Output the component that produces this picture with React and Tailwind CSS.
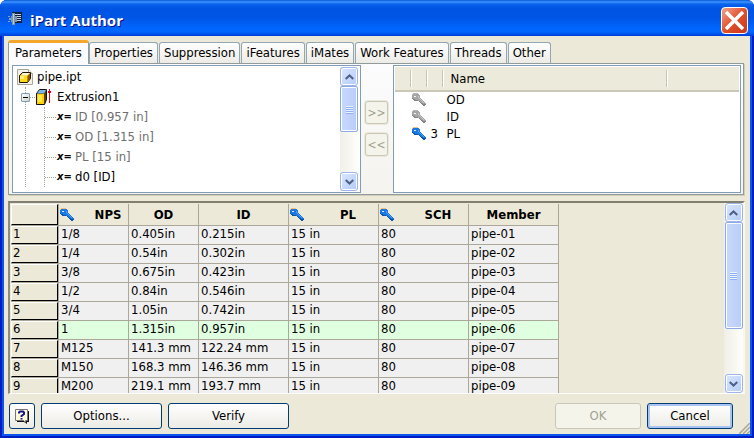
import React, { useState } from 'react';

const TABS = ['Parameters', 'Properties', 'Suppression', 'iFeatures', 'iMates', 'Work Features', 'Threads', 'Other'];

const TREE_PARAMS = [
  { label: 'ID [0.957 in]', used: true },
  { label: 'OD [1.315 in]', used: true },
  { label: 'PL [15 in]', used: true },
  { label: 'd0 [ID]', used: false },
];

const SELECTED = [
  { name: 'OD', order: '' },
  { name: 'ID', order: '' },
  { name: 'PL', order: '3' },
];

const COLUMNS = [
  { name: 'NPS', isKey: true, width: 'w-[70px]' },
  { name: 'OD', isKey: false, width: 'w-[70px]' },
  { name: 'ID', isKey: false, width: 'w-[90px]' },
  { name: 'PL', isKey: true, width: 'w-[90px]' },
  { name: 'SCH', isKey: true, width: 'w-[90px]' },
  { name: 'Member', isKey: false, width: 'w-[90px]' },
];

const ROWS = [
  ['1/8', '0.405in', '0.215in', '15 in', '80', 'pipe-01'],
  ['1/4', '0.54in', '0.302in', '15 in', '80', 'pipe-02'],
  ['3/8', '0.675in', '0.423in', '15 in', '80', 'pipe-03'],
  ['1/2', '0.84in', '0.546in', '15 in', '80', 'pipe-04'],
  ['3/4', '1.05in', '0.742in', '15 in', '80', 'pipe-05'],
  ['1', '1.315in', '0.957in', '15 in', '80', 'pipe-06'],
  ['M125', '141.3 mm', '122.24 mm', '15 in', '80', 'pipe-07'],
  ['M150', '168.3 mm', '146.36 mm', '15 in', '80', 'pipe-08'],
  ['M200', '219.1 mm', '193.7 mm', '15 in', '80', 'pipe-09'],
];

function KeyIcon({ active }) {
  return (
    <svg className="h-[14px] w-[14px] shrink-0" viewBox="0 0 14 14" shapeRendering="crispEdges">
      <path
        d="M1 1h6v1h1v3h1v1h1v1h1v1h1v1h1v1h1v2h-1v1h-2v-1h-1v-1H9v-1H8V9H7V8H2V7H1V6H0V2h1z"
        fill={active ? '#1b78e0' : '#a6a6a6'}
      />
      <path d="M0 5h1v1h2v1h3v1h2v1h1v1h2v1h3v1h-1v1h-2v-1h-1v-1H9v-1H8V9H7V8H2V7H1V6H0z" fill={active ? '#0b55b0' : '#858585'} />
      <path d="M6 3h1v2h1v1h1v1h1v1h1v1h1v1h-1V9h-1V8H9V7H8V6H7V5H6z" fill={active ? '#4ea0f4' : '#c4c4c4'} />
      <path d="M2 3h2v1H2z" fill={active ? '#cfe6ff' : '#f4f4f4'} />
      <path d="M1 0h5v1H1zM0 1h1v1H0z" fill={active ? '#f3bd7c' : '#b4b4b4'} />
    </svg>
  );
}

function AppIcon() {
  return (
    <svg className="h-4 w-4 shrink-0" viewBox="0 0 16 16" shapeRendering="crispEdges">
      <path d="M4 0h10v11H4z" fill="#10243f" />
      <path d="M7 2h6v1H7zM7 4h6v1H7zM7 6h6v1H7zM7 8h6v1H7z" fill="#c6cfda" />
      <path d="M4 1h3v3h2v6H7v3H4v-3H3V4h1z" fill="#7d94ad" />
      <path d="M0 4h2v1H0zM0 9h2v1H0zM1 6h2v2H1z" fill="#7aa6d4" />
      <path d="M5 2h1v10H5z" fill="#b8c9da" />
    </svg>
  );
}

function PartIcon() {
  return (
    <svg className="h-4 w-4 shrink-0" viewBox="0 0 16 16">
      <path d="M.5.500h11l4 4v11H.5z" fill="#f3f1ea" stroke="#a9a79c" />
      <path d="M11.500.500v4h4" fill="#fff" stroke="#a9a79c" />
      <path d="M2.500 6.500l3-3h8v6l-3 4h-8z" fill="#e8b400" stroke="#1c1600" />
      <path d="M3 7h7v6H3z" fill="#ffd91a" />
      <path d="M3 7h4v3H3z" fill="#fff27a" />
      <path d="M6 4h7l-2.500 2.500H4z" fill="#fffbd0" />
      <path d="M10.500 7v6l2.500-3.500V4.500z" fill="#8a5a00" />
    </svg>
  );
}

function ExtrusionIcon() {
  return (
    <svg className="h-4 w-4 shrink-0" viewBox="0 0 16 16">
      <path d="M.5 4.500l3-4h7v10l-2 5h-8z" fill="#5a4300" stroke="#111" />
      <path d="M1 4.500L3.500 1H10L8 4.500z" fill="#7cb4ea" />
      <path d="M1 5h7v10H1z" fill="#ffd000" />
      <path d="M2 6h4v7H2z" fill="#ffe84a" />
      <path d="M13 0h1v14h-1zM12 2h3v2h-3z" fill="#e00010" shapeRendering="crispEdges" />
    </svg>
  );
}

function HelpIcon() {
  return (
    <svg className="h-4 w-4" viewBox="0 0 16 16">
      <path d="M3 3h12v11h-2v2l-3-2H3z" fill="#111" />
      <path d="M1.500 1.500h12v11h-2v2l-2-2h-8z" fill="#fffbd8" stroke="#777" />
      <path d="M5 5.500V4.500L6 3.500h3l1 1v1.500L7.500 8v1" fill="none" stroke="#15158c" strokeWidth="2" />
      <path d="M6.500 10h2v1.500h-2z" fill="#15158c" />
    </svg>
  );
}

function ScrollButton({ up, label }) {
  return (
    <button
      type="button"
      aria-label={label}
      className="flex h-[19px] w-[18px] shrink-0 items-center justify-center rounded-[3px] border border-[#9db5ea] bg-linear-to-br from-[#dbe6fe] to-[#b4cbf8] shadow-[inset_0_0_0_1px_#fff]"
    >
      <svg className="h-[6px] w-[9px]" viewBox="0 0 9 6" fill="none" stroke="#4d6185" strokeWidth="2">
        <path d={up ? 'M.7 5l3.800-3.600L8.300 5' : 'M.7 1l3.800 3.600L8.300 1'} />
      </svg>
    </button>
  );
}

function Scrollbar({ thumb, name }) {
  return (
    <div className="flex w-[19px] shrink-0 flex-col items-center bg-linear-to-r from-[#f0efe7] to-[#fefefb]">
      <ScrollButton up label={`Scroll ${name} up`} />
      <div className="min-h-0 w-[18px] flex-1">
        <div
          className={`${thumb} flex w-full flex-col items-center justify-center gap-px rounded-[2px] border border-[#8caae6] bg-linear-to-r from-[#c9d8fc] to-[#b9cdfa] shadow-[inset_0_0_0_1px_#fff]`}
        >
          <i className="h-px w-[7px] bg-[#eef4fe] shadow-[0_1px_0_#8cb0f8]" />
          <i className="h-px w-[7px] bg-[#eef4fe] shadow-[0_1px_0_#8cb0f8]" />
          <i className="h-px w-[7px] bg-[#eef4fe] shadow-[0_1px_0_#8cb0f8]" />
          <i className="h-px w-[7px] bg-[#eef4fe] shadow-[0_1px_0_#8cb0f8]" />
        </div>
      </div>
      <ScrollButton label={`Scroll ${name} down`} />
    </div>
  );
}

function TabStrip({ active, onSelect }) {
  return (
    <div role="tablist" className="flex h-[24px] items-end pl-1">
      {TABS.map((tab) =>
        tab === active ? (
          <button
            key={tab}
            type="button"
            role="tab"
            aria-selected="true"
            className="z-10 -mb-px h-[24px] rounded-t-[3px] border-x border-t-3 border-x-[#919b9c] border-t-[#f4a62a] bg-[#fcfcfe] px-[6px] pb-[2px]"
          >
            {tab}
          </button>
        ) : (
          <button
            key={tab}
            type="button"
            role="tab"
            aria-selected="false"
            onClick={() => onSelect(tab)}
            className="mr-px h-[21px] rounded-t-[3px] border border-b-0 border-[#91a7b4] bg-linear-to-b from-white to-[#ecebe6] px-1"
          >
            {tab}
          </button>
        )
      )}
    </div>
  );
}

function ParameterTree() {
  return (
    <div className="flex min-w-0 flex-[350] border border-[#7f9db9] bg-white p-px">
      <ul className="min-w-0 flex-1 pl-[3px]">
        <li>
          <div className="flex h-5 items-center gap-1">
            <PartIcon />
            <span>pipe.ipt</span>
          </div>
          <ul className="ml-2 border-l border-dotted border-[#a5a294]">
            <li>
              <div className="-ml-[5px] flex h-5 items-center">
                <button
                  type="button"
                  aria-label="Collapse Extrusion1"
                  className="flex h-[9px] w-[9px] items-center justify-center rounded-[1px] border border-[#7b9ebd] bg-linear-to-br from-white to-[#d4d0c4]"
                >
                  <span className="h-px w-[5px] bg-black" />
                </button>
                <span className="mr-px w-[5px] border-t border-dotted border-[#a5a294]" />
                <ExtrusionIcon />
                <span className="ml-[5px]">Extrusion1</span>
              </div>
              <ul className="ml-[18px] border-l border-dotted border-[#a5a294]">
                {TREE_PARAMS.map((p) => (
                  <li key={p.label} className="flex h-5 items-center">
                    <span className="w-[11px] border-t border-dotted border-[#a5a294]" />
                    <span className="w-[19px] pl-px text-[11px] font-bold">
                      <i>x</i>=
                    </span>
                    <span className={p.used ? 'text-[#6e6e6e]' : 'text-black'}>{p.label}</span>
                  </li>
                ))}
              </ul>
            </li>
          </ul>
        </li>
      </ul>
      <Scrollbar thumb="h-[46px]" name="tree" />
    </div>
  );
}

function SelectedList() {
  return (
    <div className="min-w-0 flex-[350] border border-[#7f9db9] bg-white p-px">
      <table className="w-full table-fixed border-collapse text-left">
        <thead>
          <tr className="h-[24px] border-b-2 border-[#cbc7b8] bg-[#ebeadb]">
            <th className="w-[16px] p-0"><div className="h-[17px] border-r border-[#c7c5b2] shadow-[1px_0_0_#fff]" /></th>
            <th className="w-[16px] p-0"><div className="h-[17px] border-r border-[#c7c5b2] shadow-[1px_0_0_#fff]" /></th>
            <th className="w-[16px] p-0"><div className="h-[17px] border-r border-[#c7c5b2] shadow-[1px_0_0_#fff]" /></th>
            <th className="p-0 font-normal">
              <div className="h-[17px] border-r border-[#c7c5b2] pl-2 leading-[18px] shadow-[1px_0_0_#fff]">Name</div>
            </th>
            <th className="w-[72px] p-0" />
          </tr>
        </thead>
        <tbody>
          {SELECTED.map((item) => (
            <tr key={item.name} className="h-[17px]">
              <td className="p-0" />
              <td className="p-0 pl-px"><KeyIcon active={item.order !== ''} /></td>
              <td className="p-0 pl-1">{item.order}</td>
              <td className="p-0 pl-1">{item.name}</td>
              <td className="p-0" />
            </tr>
          ))}
        </tbody>
      </table>
    </div>
  );
}

function MemberTable({ current, onSelect }) {
  return (
    <div className="flex min-h-0 flex-1 border-t-2 border-r-2 border-b border-l-2 border-t-[#817f6f] border-r-[#f8f7f0] border-b-white border-l-[#8f8c7c] bg-[#ece9d8]">
      <div className="min-w-0 flex-1 overflow-hidden border-t border-l border-[#ece9d8]">
        <table className="w-[548px] table-fixed border-separate border-spacing-0 text-left">
          <thead>
            <tr className="h-[22px]">
              <th className="w-[48px] border-r border-b border-[#aca899] p-0">
                <div className="h-[21px] border-t border-r border-b border-l border-t-white border-r-black border-b-black border-l-white" />
              </th>
              {COLUMNS.map((col) => (
                <th key={col.name} className={`${col.width} border-r border-b border-[#aca899] p-0 font-bold`}>
                  {col.isKey ? (
                    <div className="flex items-center pl-px">
                      <KeyIcon active />
                      <span className="flex-1 pl-[14px] text-center">{col.name}</span>
                    </div>
                  ) : (
                    <div className="text-center">{col.name}</div>
                  )}
                </th>
              ))}
            </tr>
          </thead>
          <tbody>
            {ROWS.map((row, i) => (
              <tr
                key={row[5]}
                onClick={() => onSelect(i)}
                className={`h-[19px] leading-[14px] ${i === current ? 'bg-[#e0ffe0]' : 'bg-[#f0f0f0]'}`}
              >
                <th className="border-r border-b border-[#aca899] bg-[#ece9d8] p-0 font-normal">
                  <div className="h-[18px] border-t border-r border-b border-l border-t-white border-r-black border-b-black border-l-white pl-px">
                    {i + 1}
                  </div>
                </th>
                {row.map((value, c) => (
                  <td key={COLUMNS[c].name} className="border-r border-b border-[#aca899] p-0 pt-px pl-[2px] align-top whitespace-nowrap">
                    {value}
                  </td>
                ))}
              </tr>
            ))}
          </tbody>
        </table>
      </div>
      <Scrollbar thumb="h-[107px]" name="members" />
    </div>
  );
}

const pushButton = 'h-[26px] rounded-[3px] border border-[#003c74] bg-linear-to-b from-white to-[#ecebe5]';
const moveButton = 'h-[23px] w-[23px] rounded-[3px] border border-[#c9c7ba] bg-[#f5f4ea] text-[12px] text-[#a1a192] shadow-[0_0_0_1px_#ece9d8]';

function App() {
  const [tab, setTab] = useState('Parameters');
  const [current, setCurrent] = useState(5);

  return (
    <div className="flex h-screen flex-col overflow-hidden rounded-t-[7px] bg-[#0a55ee] shadow-[inset_0_0_0_2px_#001dc4] font-['DejaVu_Sans_Condensed','DejaVu_Sans',sans-serif] text-[13px] leading-4 text-black">
      <header className="flex h-[36px] shrink-0 items-center gap-[6px] bg-[linear-gradient(to_bottom,#0958d8_0,#3d95ff_2px,#0a64ee_4px,#0054e3_8px,#0055e5_18px,#0066ff_28px,#0066fd_32px,#003dd7_36px)] pt-1 pr-[6px] pl-2">
        <AppIcon />
        <h1 className="flex-1 font-['Open_Sans','Noto_Sans',sans-serif] text-[15px] leading-5 font-bold text-white [text-shadow:1px_1px_#0f1089]">
          iPart Author
        </h1>
        <button
          type="button"
          aria-label="Close"
          className="flex h-[27px] w-[27px] items-center justify-center rounded-[4px] border border-white bg-linear-to-br from-[#f0a088] via-[#e0502c] to-[#c8381a]"
        >
          <svg className="h-[19px] w-[19px]" viewBox="0 0 19 19" stroke="#fff" strokeWidth="3.500">
            <path d="M1 1l17 17M18 1L1 18" />
          </svg>
        </button>
      </header>

      <main className="mx-1 mb-1 flex min-h-0 flex-1 flex-col bg-[#ece9d8] pt-[3px]">
        <TabStrip active={tab} onSelect={setTab} />
        <section
          role="tabpanel"
          className="mr-[6px] ml-1 flex h-[132px] shrink-0 border border-[#919b9c] bg-linear-to-b from-[#fcfcfe] to-[#f4f3ee] pt-px pr-[2px] pb-px pl-[3px] shadow-[1px_1px_0_#d0ceb9]"
        >
          <ParameterTree />
          <div className="flex w-[32px] shrink-0 flex-col items-center gap-[9px] pt-[36px]">
            <button type="button" disabled aria-label="Add parameter" className={moveButton}>&gt;&gt;</button>
            <button type="button" disabled aria-label="Remove parameter" className={moveButton}>&lt;&lt;</button>
          </div>
          <SelectedList />
        </section>

        <div className="mt-[6px] flex min-h-0 flex-1 pr-[5px] pl-1">
          <MemberTable current={current} onSelect={setCurrent} />
        </div>

        <footer className="flex h-[40px] shrink-0 items-center gap-[6px] pt-1 pl-[5px]">
          <button type="button" aria-label="Help" className={`${pushButton} flex w-[26px] items-center justify-center`}>
            <HelpIcon />
          </button>
          <button type="button" className={`${pushButton} w-[121px]`}>Options...</button>
          <button type="button" className={`${pushButton} w-[121px]`}>Verify</button>
          <button type="button" disabled className="ml-auto h-[26px] w-[86px] rounded-[3px] border border-[#c9c7ba] bg-[#f5f4ea] text-[#a1a192]">
            OK
          </button>
          <button type="button" className={`${pushButton} w-[86px] shadow-[inset_0_0_0_2px_#a9c3f2]`}>Cancel</button>
          <svg className="h-[11px] w-[11px] self-end" viewBox="0 0 11 11" fill="none">
            <path d="M0 11L11 0M4 11l7-7M8 11l3-3" stroke="#aca899" strokeWidth="1.500" />
          </svg>
        </footer>
      </main>
    </div>
  );
}

export default App;
